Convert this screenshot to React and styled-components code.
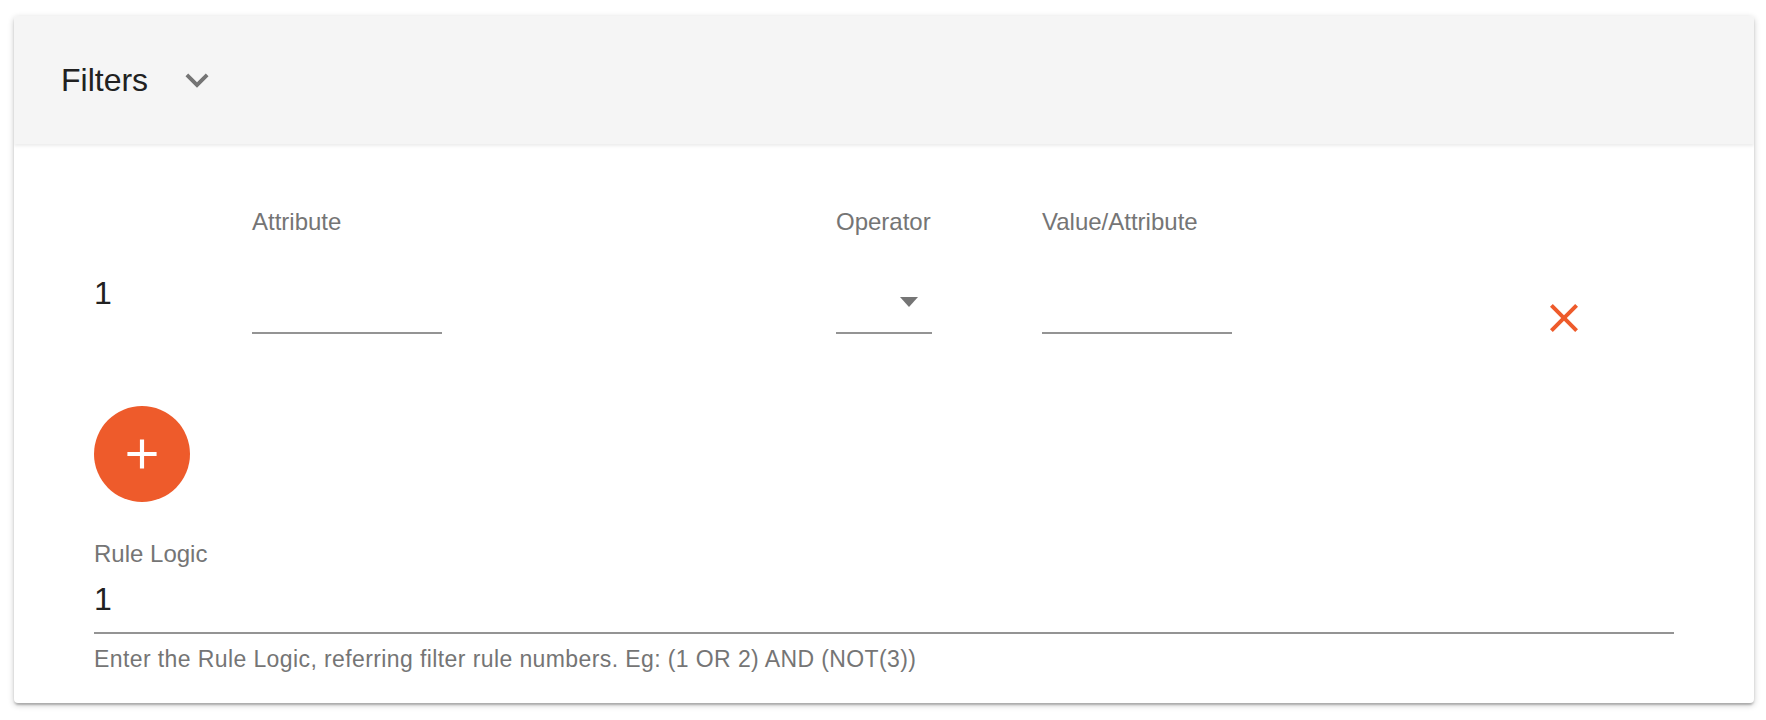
import React from "react";
import styled, { createGlobalStyle } from "styled-components";

const GlobalStyle = createGlobalStyle`
  html, body {
    margin: 0;
    padding: 0;
    background: #ffffff;
  }
  body {
    font-family: "Liberation Sans", Arial, Helvetica, sans-serif;
    color: rgba(0, 0, 0, 0.87);
  }
  * { box-sizing: border-box; }
`;

const ORANGE = "#ee5b2b";

const Page = styled.div`
  padding: 16px 12px 17px 14px;
`;

const Card = styled.section`
  background: #ffffff;
  border-radius: 4px;
  overflow: hidden;
  box-shadow: 0 2px 6px rgba(0, 0, 0, 0.22), 0 2px 2px rgba(0, 0, 0, 0.12),
    0 4px 2px -2px rgba(0, 0, 0, 0.1);
`;

const Header = styled.header`
  height: 128px;
  background: #f5f5f5;
  display: flex;
  align-items: center;
  gap: 26px;
  padding-left: 47px;
  position: relative;
  box-shadow: 0 2px 3px rgba(0, 0, 0, 0.08);
`;

const Title = styled.h2`
  margin: 0;
  font-size: 32px;
  line-height: 32px;
  font-weight: 400;
  color: #212121;
`;

const Chevron = styled.svg`
  width: 46px;
  height: 46px;
  fill: #757575;
  display: block;
`;

const Body = styled.div`
  padding: 66px 80px 34px 80px;
`;

const RuleRow = styled.div`
  display: grid;
  grid-template-columns: 158px 584px 206px 508px auto;
  align-items: start;
`;

const RowNumber = styled.div`
  padding-top: 67px;
  font-size: 32px;
  line-height: 32px;
  color: #212121;
`;

const Field = styled.div`
  width: ${(p) => p.$width}px;
  display: flex;
  flex-direction: column;
`;

const Label = styled.label`
  font-size: 24px;
  line-height: 24px;
  color: #757575;
`;

const InputBox = styled.div`
  height: 100px;
  border-bottom: 2px solid #949494;
  display: flex;
  justify-content: flex-end;
  align-items: flex-end;
  padding: 0 14px 25px 0;
`;

const Caret = styled.span`
  width: 0;
  height: 0;
  border-left: 9.5px solid transparent;
  border-right: 9.5px solid transparent;
  border-top: 10px solid #757575;
`;

const RemoveButton = styled.button`
  margin: 84px 0 -8px -10px;
  padding: 0;
  border: none;
  background: transparent;
  width: 48px;
  height: 48px;
  cursor: pointer;
  svg {
    display: block;
    width: 48px;
    height: 48px;
    fill: ${ORANGE};
  }
`;

const AddButton = styled.button`
  margin-top: 72px;
  width: 96px;
  height: 96px;
  border-radius: 50%;
  border: none;
  padding: 0;
  background: ${ORANGE};
  display: flex;
  align-items: center;
  justify-content: center;
  cursor: pointer;
  svg {
    width: 50px;
    height: 50px;
    fill: #ffffff;
    display: block;
  }
`;

const LogicField = styled.div`
  margin-top: 40px;
  display: flex;
  flex-direction: column;
`;

const LogicValue = styled.div`
  margin-top: 17px;
  padding-bottom: 17px;
  font-size: 32px;
  line-height: 32px;
  color: #212121;
  border-bottom: 2px solid #949494;
`;

const Helper = styled.p`
  margin: 15px 0 0 0;
  font-size: 23px;
  line-height: 20px;
  letter-spacing: 0.4px;
  color: #757575;
`;

export default function App() {
  return (
    <>
      <GlobalStyle />
      <Page>
        <Card>
          <Header>
            <Title>Filters</Title>
            <Chevron viewBox="0 0 24 24">
              <path d="M16.59 8.59L12 13.17 7.41 8.59 6 10l6 6 6-6z" />
            </Chevron>
          </Header>
          <Body>
            <RuleRow>
              <RowNumber>1</RowNumber>
              <Field $width={190}>
                <Label>Attribute</Label>
                <InputBox />
              </Field>
              <Field $width={96}>
                <Label>Operator</Label>
                <InputBox>
                  <Caret />
                </InputBox>
              </Field>
              <Field $width={190}>
                <Label>Value/Attribute</Label>
                <InputBox />
              </Field>
              <RemoveButton aria-label="Remove rule">
                <svg viewBox="0 0 24 24">
                  <path d="M19 6.41L17.59 5 12 10.59 6.41 5 5 6.41 10.59 12 5 17.59 6.41 19 12 13.41 17.59 19 19 17.59 13.41 12z" />
                </svg>
              </RemoveButton>
            </RuleRow>
            <AddButton aria-label="Add rule">
              <svg viewBox="0 0 24 24">
                <path d="M19 13h-6v6h-2v-6H5v-2h6V5h2v6h6v2z" />
              </svg>
            </AddButton>
            <LogicField>
              <Label>Rule Logic</Label>
              <LogicValue>1</LogicValue>
            </LogicField>
            <Helper>
              Enter the Rule Logic, referring filter rule numbers. Eg: (1 OR 2) AND (NOT(3))
            </Helper>
          </Body>
        </Card>
      </Page>
    </>
  );
}
